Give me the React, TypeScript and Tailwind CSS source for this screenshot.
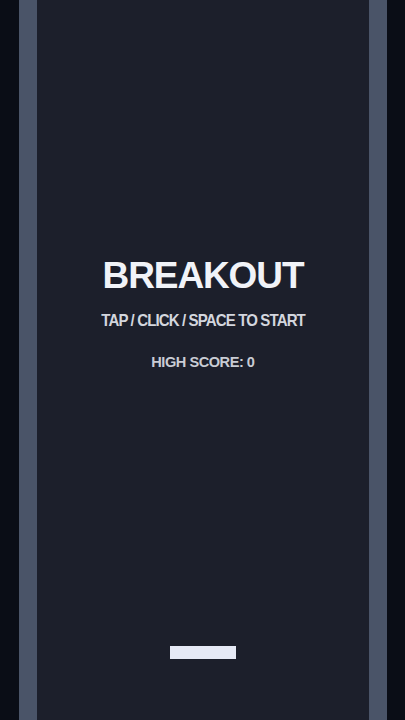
import React from "react";

export default function App() {
  return (
    <div className="flex h-[720px] w-full overflow-hidden bg-[#0a0d16]" style={{ fontFamily: '"Liberation Sans", Arial, sans-serif' }}>
      <div className="w-[19px] shrink-0 bg-[#0a0d16]" />
      <div className="w-[18px] shrink-0 bg-[#4a5468]" />
      <div className="flex flex-1 flex-col items-center bg-[#1c1f2b] pt-[257px]">
        <div className="h-[37px] whitespace-nowrap text-[37px] font-bold leading-[37px] tracking-[-1.1px] text-[#f1f3f8]">BREAKOUT</div>
        <div className="mt-[19px] h-[16px] whitespace-nowrap text-[17px] font-bold leading-[16px] tracking-[-1px] text-[#d3d6de] scale-x-[0.885]">TAP / CLICK / SPACE TO START</div>
        <div className="mt-[25px] h-[15px] whitespace-nowrap text-[15.5px] font-bold leading-[15px] tracking-[-0.5px] text-[#c9ccd4] scale-x-[0.94]">HIGH SCORE: 0</div>
        <div className="mt-auto mb-[61px] h-[13px] w-[66px] bg-[#e6eaf6]" />
      </div>
      <div className="w-[18px] shrink-0 bg-[#4a5468]" />
      <div className="w-[18px] shrink-0 bg-[#0a0d16]" />
    </div>
  );
}
